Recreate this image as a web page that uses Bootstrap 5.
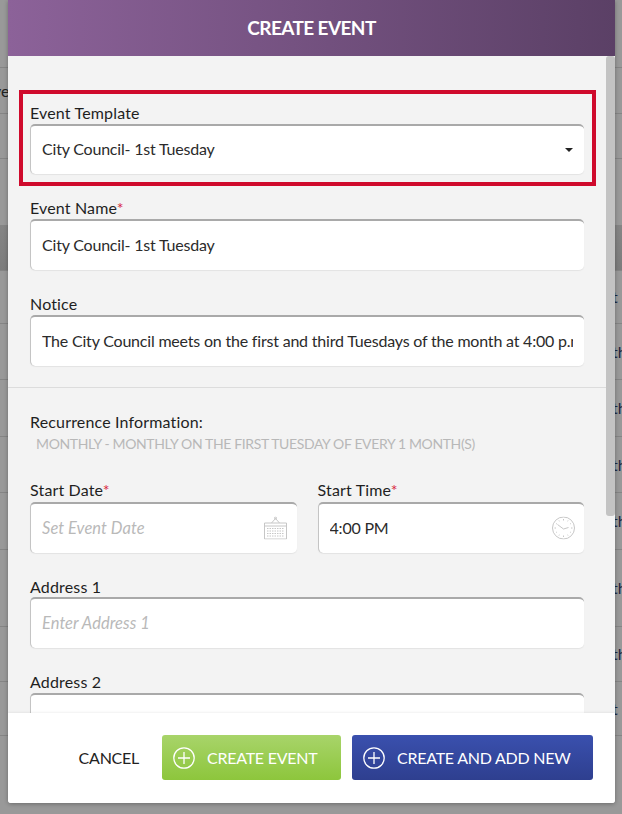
<!DOCTYPE html>
<html lang="en">
<head>
<meta charset="utf-8">
<title>Create Event</title>
<link href="https://cdn.jsdelivr.net/npm/bootstrap@5.3.0/dist/css/bootstrap.min.css" rel="stylesheet">
<style>
html, body { height: 100%; overflow: hidden; }
body { background: #999; font-family: Lato, "Liberation Sans", sans-serif; color: #212121; }
.stage { height: 814px; width: 622px; overflow: hidden; }
.bg-row { border-bottom: 1px solid #858585; font-size: 16px; color: #1d2640; white-space: nowrap; display: flex; align-items: center; padding-left: 612px; }
.rh-67 { height: 68px; } .rh-46 { height: 46px; padding-left: 0; color: #222; } .rh-45 { height: 45px; } .rh-66 { height: 66px; border-bottom: 0; }
.rh-band { height: 46px; background: linear-gradient(#858585, #7c7c7c); }
.rh-53 { height: 53px; } .rh-56 { height: 56px; } .rh-57 { height: 57px; } .rh-77 { height: 77px; } .rh-55 { height: 55px; } .rh-54 { height: 54px; }
.clip-left { margin-left: -7px; }
.dlg { position: absolute; left: 8px; top: 0; width: 607px; height: 803px; background: #f3f3f3; box-shadow: 0 1px 4px rgba(0,0,0,.3); border-radius: 0 0 3px 3px; overflow: hidden; }
.dlg-head { height: 56px; flex: none; background: linear-gradient(90deg, #8c6299, #5b4066); color: #fff; font-size: 19px; font-weight: 700; letter-spacing: -.6px; }
.dlg-body { height: 657px; flex: none; overflow: hidden; padding: 34px 0 0 11px; position: relative; }
.scroll-thumb { position: absolute; right: 0; top: 0; width: 9px; height: 460px; background: #c3c3c3; border-radius: 3px; }
.hl-box { border: 4px solid #cf0a2c; margin-bottom: 12px; padding: 9px 8px 8px 7px; width: 577px; }
.fld { margin: 0 0 24px 11px; width: 554px; }
.lbl { display: block; font-size: 16px; line-height: 20px; margin-bottom: 1px; color: #1f1f1f; letter-spacing: .01em; }
.req { color: #d8283f; }
.inp.form-control, .inp.form-select { height: 51px; background-color: #fff; border-radius: 5px; border: 0; border-top: 2px solid #a9a9a9; border-left: 1px solid #c4c4c4; box-shadow: 0 1px 1px #e3e3e3; font-size: 16px; letter-spacing: -.2px; padding: 0 11px 2px; color: #2b2b2b; }
.inp.form-select { height: 50px; background-image: url("data:image/svg+xml,%3Csvg xmlns='http://www.w3.org/2000/svg' viewBox='0 0 8 4'%3E%3Cpath fill='%23222' d='M0 0h8L4 4z'/%3E%3C/svg%3E"); background-size: 8px 4px; background-position: right 11px center; }
.inp::placeholder { color: #b9b9b9; font-style: italic; font-size: 16.5px; letter-spacing: .05px; opacity: 1; }
.rule { border-top: 1px solid #dcdcdc; margin: 21px 0 24px -11px; }
.rec { font-size: 16px; line-height: 20px; color: #1f1f1f; margin-left: 11px; letter-spacing: .01em; }
.rec-sub { font-size: 14px; letter-spacing: -.37px; line-height: 20px; color: #b8b8b8; margin: 2px 0 26px 17px; white-space: nowrap; }
.pair { gap: 21px; margin: 0 0 24px 11px; width: 554px; }
.pair .lbl { margin-bottom: 2px; }
.half { flex: 1 1 0; min-width: 0; }
.ic-field { right: 9px; top: 50%; transform: translateY(-50%); }
.ic-cal { right: 10px; }
.notice-fld { margin-bottom: 0; }
.dlg-foot { height: 90px; flex: none; background: #fff; padding: 22px 22px 0 0; position: relative; gap: 11px; box-shadow: 0 -1px 2px rgba(0,0,0,.06); }
.act { height: 45px; border-radius: 3px; color: #fff; font-size: 16px; letter-spacing: -.25px; border: 0; padding: 0 0 0 11px; gap: 12px; white-space: nowrap; }
.act:hover { color: #fff; }
.act-green { width: 179px; background: linear-gradient(#a8d46a, #8dc63c); }
.act-blue { width: 241px; background: linear-gradient(#3a50ae, #2e3f8f); }
.act-cancel { height: 45px; color: #222; font-size: 16px; letter-spacing: -.25px; margin-right: 12px; }
</style>
</head>
<body>
<div class="stage position-relative">
  <div class="bg-row rh-67"></div>
  <div class="bg-row rh-46"><span class="clip-left">ve</span></div>
  <div class="bg-row rh-45"></div>
  <div class="bg-row rh-66"></div>
  <div class="bg-row rh-band"></div>
  <div class="bg-row rh-53">t</div>
  <div class="bg-row rh-56">th</div>
  <div class="bg-row rh-57">th</div>
  <div class="bg-row rh-56">th</div>
  <div class="bg-row rh-57">th</div>
  <div class="bg-row rh-77">th</div>
  <div class="bg-row rh-55">th</div>
  <div class="bg-row rh-54">t</div>

  <div class="dlg d-flex flex-column">
    <div class="dlg-head d-flex align-items-center justify-content-center">CREATE EVENT</div>
    <div class="dlg-body">
      <div class="scroll-thumb"></div>
      <div class="hl-box">
        <label class="lbl" for="tpl">Event Template</label>
        <select id="tpl" class="form-select inp"><option>City Council- 1st Tuesday</option></select>
      </div>
      <div class="fld">
        <label class="lbl" for="nm">Event Name<span class="req">*</span></label>
        <input id="nm" class="form-control inp" value="City Council- 1st Tuesday">
      </div>
      <div class="fld notice-fld">
        <label class="lbl" for="nt">Notice</label>
        <input id="nt" class="form-control inp" value="The City Council meets on the first and third Tuesdays of the month at 4:00 p.m.">
      </div>
      <div class="rule"></div>
      <div class="rec">Recurrence Information:</div>
      <div class="rec-sub">MONTHLY - MONTHLY ON THE FIRST TUESDAY OF EVERY 1 MONTH(S)</div>
      <div class="pair d-flex">
        <div class="half">
          <label class="lbl" for="sd">Start Date<span class="req">*</span></label>
          <div class="position-relative">
            <input id="sd" class="form-control inp" placeholder="Set Event Date">
            <svg class="ic-field ic-cal position-absolute" width="23" height="23" viewBox="0 0 23 23" fill="none" stroke="#c6c6c6" stroke-width="1"><path d="M.5 6.500h22v16H.5zM.5 9.500h22M7.500 6.500l4-4.500 4 4.500"/><circle cx="11.500" cy="1.500" r="1"/><path d="M3 12h17M3 14.500h17M3 17h17M3 19.500h17" stroke-dasharray="1.500 1"/></svg>
          </div>
        </div>
        <div class="half">
          <label class="lbl" for="st">Start Time<span class="req">*</span></label>
          <div class="position-relative">
            <input id="st" class="form-control inp" value="4:00 PM">
            <svg class="ic-field position-absolute" width="23" height="23" viewBox="0 0 23 23" fill="none" stroke="#c6c6c6" stroke-width="1"><circle cx="11.500" cy="11.500" r="11"/><path d="M11.500 12.500L5.500 8M11.500 12.500l5-1.500"/><path d="M11.500 2.500v1.500M11.500 19v1.500M2.500 11.500H4M19 11.500h1.500M7 4l.4.800M16 4l-.4.800M7 19l.4-.8M16 19l-.4-.8M4 7l.8.400M19 16l-.8-.4M4 16l.8-.4M19 7l-.8.400"/></svg>
          </div>
        </div>
      </div>
      <div class="fld">
        <label class="lbl mb-0" for="a1">Address 1</label>
        <input id="a1" class="form-control inp" placeholder="Enter Address 1">
      </div>
      <div class="fld">
        <label class="lbl" for="a2">Address 2</label>
        <input id="a2" class="form-control inp">
      </div>
    </div>
    <div class="dlg-foot d-flex justify-content-end align-items-start">
      <div class="act-cancel d-flex align-items-center">CANCEL</div>
      <button type="button" class="btn act act-green d-flex align-items-center">
        <svg width="22" height="22" viewBox="0 0 22 22" fill="none" stroke="#fff" stroke-width="1.300"><circle cx="11" cy="11" r="10.200"/><path d="M11 5v12M5 11h12"/></svg>
        <span>CREATE EVENT</span>
      </button>
      <button type="button" class="btn act act-blue d-flex align-items-center">
        <svg width="22" height="22" viewBox="0 0 22 22" fill="none" stroke="#fff" stroke-width="1.300"><circle cx="11" cy="11" r="10.200"/><path d="M11 5v12M5 11h12"/></svg>
        <span>CREATE AND ADD NEW</span>
      </button>
    </div>
  </div>
</div>
<script src="https://cdn.jsdelivr.net/npm/bootstrap@5.3.0/dist/js/bootstrap.bundle.min.js"></script>
</body>
</html>
